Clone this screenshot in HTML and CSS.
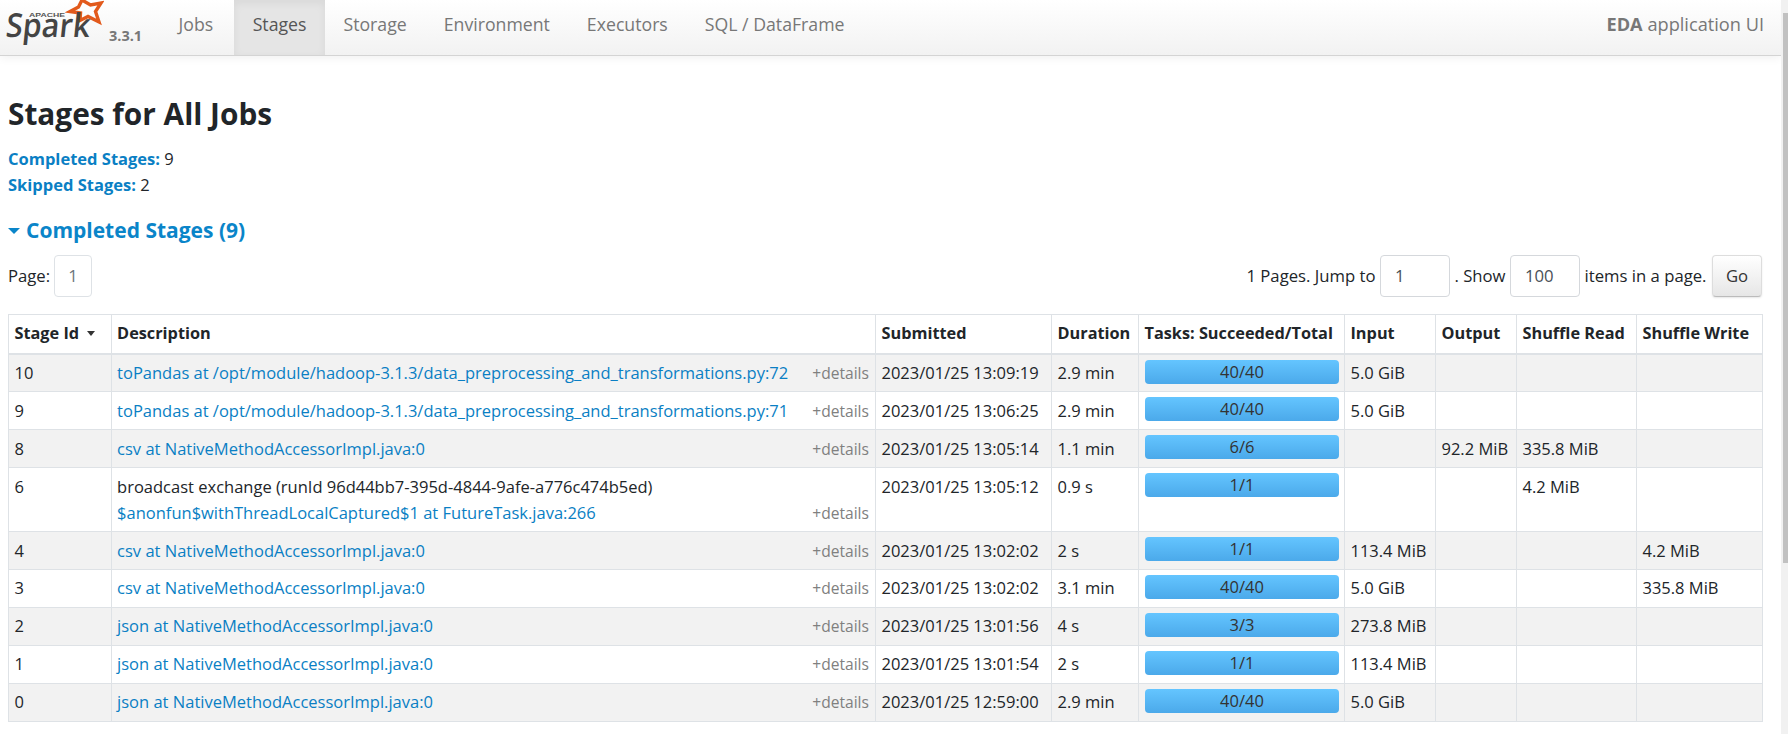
FILE: index.html
```html
<!DOCTYPE html>
<html lang="en">
<head>
<meta charset="utf-8">
<title>Stages for All Jobs</title>
<link rel="stylesheet" href="styles.css">
</head>
<body>
<div class="page">
  <div class="main">
    <nav class="navbar">
      <a class="brand" href="#">
        <svg class="logo" width="104" height="50" viewBox="0 0 104 50" aria-label="Apache Spark">
          <path class="star" d="M82 0 L90.500 5 L101 3 L95.500 11.500 L99 22 L88 16.500 L80 20.500 L80.500 13 L70 11.500 L78.500 7 Z"/>
          <text class="logo-apache" x="29" y="17" textLength="36" lengthAdjust="spacingAndGlyphs">APACHE</text>
          <text class="logo-spark" x="5" y="37" textLength="84" lengthAdjust="spacingAndGlyphs" transform="skewX(-6) translate(4 0)">Spark</text>
        </svg>
        <span class="version">3.3.1</span>
      </a>
      <ul class="tabs">
        <li class="tab"><a href="#">Jobs</a></li>
        <li class="tab active"><a href="#">Stages</a></li>
        <li class="tab"><a href="#">Storage</a></li>
        <li class="tab"><a href="#">Environment</a></li>
        <li class="tab"><a href="#">Executors</a></li>
        <li class="tab"><a href="#">SQL / DataFrame</a></li>
      </ul>
      <p class="app-name"><strong>EDA</strong> application UI</p>
    </nav>
    <div class="content">
      <h3 class="title">Stages for All Jobs</h3>
      <ul class="summary">
        <li><a href="#"><strong>Completed Stages:</strong></a> 9</li>
        <li><a href="#"><strong>Skipped Stages:</strong></a> 2</li>
      </ul>
      <h4 class="section"><span class="caret"></span>Completed Stages (9)</h4>
      <div class="pager">
        <div class="pager-left">
          <span>Page:</span>
          <span class="page-box">1</span>
        </div>
        <form class="pager-right">
          <span>1 Pages. Jump to</span>
          <input class="num" type="text" value="1">
          <span>. Show</span>
          <input class="num" type="text" value="100">
          <span>items in a page.</span>
          <button class="go" type="button">Go</button>
        </form>
      </div>
      <table class="stages">
        <colgroup>
          <col class="c-id"><col class="c-desc"><col class="c-sub"><col class="c-dur"><col class="c-tasks"><col class="c-in"><col class="c-out"><col class="c-read"><col class="c-write">
        </colgroup>
        <thead>
          <tr>
            <th>Stage Id<span class="sort"></span></th><th>Description</th><th>Submitted</th><th>Duration</th><th>Tasks: Succeeded/Total</th><th>Input</th><th>Output</th><th>Shuffle Read</th><th>Shuffle Write</th>
          </tr>
        </thead>
        <tbody>
          <tr>
            <td>10</td>
            <td><div class="desc"><a href="#">toPandas at /opt/module/hadoop-3.1.3/data_preprocessing_and_transformations.py:72</a><span class="details">+details</span></div></td>
            <td>2023/01/25 13:09:19</td><td>2.9 min</td>
            <td><div class="bar">40/40</div></td><td>5.0 GiB</td><td></td><td></td><td></td>
          </tr>
          <tr>
            <td>9</td>
            <td><div class="desc"><a href="#">toPandas at /opt/module/hadoop-3.1.3/data_preprocessing_and_transformations.py:71</a><span class="details">+details</span></div></td>
            <td>2023/01/25 13:06:25</td><td>2.9 min</td>
            <td><div class="bar">40/40</div></td><td>5.0 GiB</td><td></td><td></td><td></td>
          </tr>
          <tr>
            <td>8</td>
            <td><div class="desc"><a href="#">csv at NativeMethodAccessorImpl.java:0</a><span class="details">+details</span></div></td>
            <td>2023/01/25 13:05:14</td><td>1.1 min</td>
            <td><div class="bar">6/6</div></td><td></td><td>92.2 MiB</td><td>335.8 MiB</td><td></td>
          </tr>
          <tr>
            <td>6</td>
            <td>
              <div class="desc-note">broadcast exchange (runId 96d44bb7-395d-4844-9afe-a776c474b5ed)</div>
              <div class="desc"><a href="#">$anonfun$withThreadLocalCaptured$1 at FutureTask.java:266</a><span class="details">+details</span></div>
            </td>
            <td>2023/01/25 13:05:12</td><td>0.9 s</td>
            <td><div class="bar">1/1</div></td><td></td><td></td><td>4.2 MiB</td><td></td>
          </tr>
          <tr>
            <td>4</td>
            <td><div class="desc"><a href="#">csv at NativeMethodAccessorImpl.java:0</a><span class="details">+details</span></div></td>
            <td>2023/01/25 13:02:02</td><td>2 s</td>
            <td><div class="bar">1/1</div></td><td>113.4 MiB</td><td></td><td></td><td>4.2 MiB</td>
          </tr>
          <tr>
            <td>3</td>
            <td><div class="desc"><a href="#">csv at NativeMethodAccessorImpl.java:0</a><span class="details">+details</span></div></td>
            <td>2023/01/25 13:02:02</td><td>3.1 min</td>
            <td><div class="bar">40/40</div></td><td>5.0 GiB</td><td></td><td></td><td>335.8 MiB</td>
          </tr>
          <tr>
            <td>2</td>
            <td><div class="desc"><a href="#">json at NativeMethodAccessorImpl.java:0</a><span class="details">+details</span></div></td>
            <td>2023/01/25 13:01:56</td><td>4 s</td>
            <td><div class="bar">3/3</div></td><td>273.8 MiB</td><td></td><td></td><td></td>
          </tr>
          <tr>
            <td>1</td>
            <td><div class="desc"><a href="#">json at NativeMethodAccessorImpl.java:0</a><span class="details">+details</span></div></td>
            <td>2023/01/25 13:01:54</td><td>2 s</td>
            <td><div class="bar">1/1</div></td><td>113.4 MiB</td><td></td><td></td><td></td>
          </tr>
          <tr>
            <td>0</td>
            <td><div class="desc"><a href="#">json at NativeMethodAccessorImpl.java:0</a><span class="details">+details</span></div></td>
            <td>2023/01/25 12:59:00</td><td>2.9 min</td>
            <td><div class="bar">40/40</div></td><td>5.0 GiB</td><td></td><td></td><td></td>
          </tr>
        </tbody>
      </table>
    </div>
  </div>
  <div class="scroll-track"><div class="scroll-thumb"></div></div>
</div>
</body>
</html>
```
FILE: styles.css
```css
* { box-sizing: border-box; }
html, body { margin: 0; padding: 0; height: 100%; overflow: hidden; }
body {
  font-family: "Open Sans", "Noto Sans", "Liberation Sans", sans-serif;
  font-size: 16.500px;
  line-height: 24px;
  color: #212529;
  background: #fff;
}
a { color: #0a7fc4; text-decoration: none; }
.page { display: flex; height: 734px; }
.main { flex: 1; min-width: 0; }
.scroll-track { width: 7px; background: #f1f1f1; padding: 13px 0 0 2px; }
.scroll-thumb { height: 550px; background: #c1c1c1; }

.navbar {
  display: flex;
  align-items: stretch;
  height: 56px;
  padding: 0 17px 0 0;
  background: linear-gradient(#ffffff, #f2f2f2);
  border-bottom: 1px solid #d4d4d4;
  box-shadow: 0 1px 10px rgba(0, 0, 0, 0.07);
}
.brand { display: flex; width: 160px; flex: none; }
.logo { flex: none; display: block; }
.star { fill: none; stroke: #e25a1c; stroke-width: 3.4; stroke-linejoin: miter; }
.logo-apache { font-family: "Liberation Sans", sans-serif; font-weight: 700; font-size: 6px; fill: #555; }
.logo-spark { font-family: "Open Sans", sans-serif; font-weight: 600; font-size: 33px; fill: #444; }
.version {
  margin: 24px 0 0 5px;
  font-weight: 700;
  font-size: 14.500px;
  color: #777;
}
.tabs { display: flex; list-style: none; margin: 0; padding: 0; flex: 1; }
.tab { display: flex; }
.tab a {
  display: flex;
  align-items: center;
  padding: 0 18.500px 7px;
  font-size: 17.700px;
  color: #777;
}
.tab:first-child a { padding-right: 21px; }
.tab.active a {
  background: #e5e5e5;
  color: #555;
  box-shadow: inset 0 3px 8px rgba(0, 0, 0, 0.06);
}
.app-name { margin: 0; align-self: center; padding-bottom: 8px; font-size: 18.200px; color: #777; }

.content { padding: 0 0 0 8px; margin-right: 19px; }
.title { margin: 38px 0 0; font-size: 29.800px; line-height: 40px; font-weight: 700; color: #212529; }
.summary { list-style: none; margin: 12px 0 0; padding: 0; }
.summary li { line-height: 26px; }
.section { display: flex; align-items: center; margin: 16.500px 0 0; font-size: 21px; line-height: 30px; font-weight: 700; color: #0a85c9; }
.caret { width: 0; height: 0; margin: 2px 6px 0 0; border: 6px solid transparent; border-top-color: #0a85c9; border-bottom: 0; }
.pager { display: flex; justify-content: space-between; align-items: center; margin-top: 10px; font-size: 16.700px; }
.pager-left, .pager-right { display: flex; align-items: center; }
.pager-left { gap: 4px; }
.pager-right { gap: 4.500px; }
.page-box {
  display: flex; align-items: center; justify-content: center;
  width: 38px; height: 42px;
  border: 1px solid #dee2e6; border-radius: 4px;
  color: #6c757d;
}
.num {
  width: 70px; height: 42px; padding: 0 14px;
  font: inherit; color: #495057;
  border: 1px solid #d5d8dc; border-radius: 4px; background: #fff;
}
.go {
  width: 50px; height: 42px; margin-left: 1px; padding: 0;
  font: inherit; color: #333;
  border: 1px solid #ddd; border-bottom-color: #bbb; border-radius: 4px;
  background: linear-gradient(#ffffff, #e6e6e6);
  box-shadow: 0 1px 2px rgba(0, 0, 0, 0.1);
}

.stages { width: 1754px; margin-top: 17px; table-layout: fixed; border-collapse: collapse; }
.c-id { width: 102.6px; }
.c-desc { width: 764.4px; }
.c-sub { width: 176px; }
.c-dur { width: 87px; }
.c-tasks { width: 206px; }
.c-in { width: 91px; }
.c-out { width: 81px; }
.c-read { width: 120px; }
.c-write { width: 126px; }
.stages th, .stages td {
  border: 1px solid #dee2e6;
  padding: 6.500px 6px 6.400px 5.500px;
  vertical-align: top;
  text-align: left;
  white-space: nowrap;
  overflow: hidden;
}
.stages th { font-weight: 700; font-size: 16.300px; color: #212529; padding: 6px 6px 8px 5.500px; }
.stages thead tr { border-bottom: 2px solid #dee2e6; }
.stages tbody tr:nth-child(odd) { background: #f2f2f2; }
.sort {
  display: inline-block; width: 0; height: 0; margin: 0 0 2px 8px;
  border: 4px solid transparent; border-top: 5px solid #333; border-bottom: 0;
  vertical-align: middle;
}
.desc { display: flex; justify-content: space-between; align-items: flex-start; }
.details { font-size: 15.600px; color: #808080; }
.bar {
  height: 24px; line-height: 24px; margin: -1.500px -1px 0 0.500px; text-align: center; color: #333;
  border-radius: 4px;
  background: linear-gradient(#64c5ff, #4ba9ea);
}
.desc-note { margin-bottom: 2px; }
```
